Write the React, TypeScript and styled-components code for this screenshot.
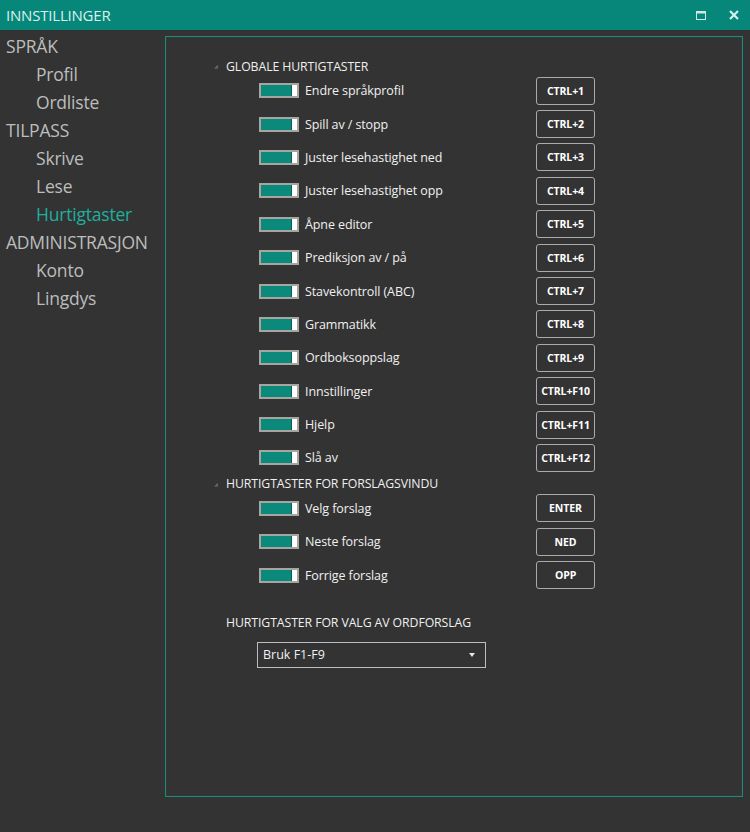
import styled, { createGlobalStyle } from "styled-components";

const GlobalStyle = createGlobalStyle`
    html, body {
        margin: 0;
        padding: 0;
        background: #333333;
    }
    body {
        font-family: "Open Sans", "Noto Sans", sans-serif;
    }
`;

const Window = styled.div`
    width: 750px;
    height: 832px;
    background: #333333;
    display: flex;
    flex-direction: column;
    overflow: hidden;
`;

const TitleBar = styled.div`
    height: 30px;
    background: #07877a;
    display: flex;
    align-items: center;
    justify-content: space-between;
    padding-left: 6px;
    padding-right: 11px;
    color: #d9f1ee;
    font-size: 15px;
    letter-spacing: -0.2px;
`;

const TitleButtons = styled.div`
    display: flex;
    align-items: center;
    gap: 23px;
`;

const Body = styled.div`
    flex: 1;
    display: flex;
    padding: 6px 7px 35px 0;
`;

const Sidebar = styled.div`
    width: 165px;
    display: flex;
    flex-direction: column;
`;

const NavItem = styled.div<{ $child?: boolean; $active?: boolean }>`
    height: 28px;
    line-height: 20px;
    font-size: 17.5px;
    padding-left: ${(p) => (p.$child ? "36px" : "6px")};
    color: ${(p) => (p.$active ? "#1fb09d" : "#bdbdbd")};
    letter-spacing: -0.2px;
    white-space: nowrap;
`;

const Panel = styled.div`
    flex: 1;
    border: 1px solid #1d8a7d;
    box-shadow: inset 0 0 0 1px #2e3a37;
    padding: 19px 0 0 48px;
    display: flex;
    flex-direction: column;
`;

const SectionHeader = styled.div<{ $tight?: boolean }>`
    display: flex;
    align-items: center;
    height: 20px;
    font-size: 12.3px;
    color: #f0f0f0;
    letter-spacing: -0.1px;
    margin-top: ${(p) => (p.$tight ? "-1px" : "0")};
    margin-bottom: -2px;
`;

const Arrow = styled.span`
    width: 12px;
    color: #6a6a6a;
    font-size: 5px;
`;

const Row = styled.div`
    display: flex;
    align-items: center;
    height: 33.4px;
    padding-left: 45px;
`;

const Toggle = styled.div`
    width: 36px;
    height: 11px;
    border: 2px solid #a8a4a0;
    background: #fff;
    display: flex;
    margin-right: 6px;
`;

const ToggleFill = styled.div`
    width: 30px;
    background: #0b8a7c;
    border-right: 1px solid #0a5f56;
`;

const Label = styled.div`
    width: 231px;
    font-size: 12.5px;
    color: #f0f0f0;
    letter-spacing: -0.1px;
`;

const KeyButton = styled.div`
    width: 57px;
    height: 26px;
    border: 1.5px solid #aaa;
    border-radius: 3px;
    display: flex;
    align-items: center;
    justify-content: center;
    font-size: 10.5px;
    font-weight: 700;
    color: #fff;
    letter-spacing: -0.1px;
`;

const SubHeader = styled.div`
    font-size: 12.3px;
    color: #f0f0f0;
    margin-top: 22px;
    padding-left: 12px;
    letter-spacing: -0.1px;
`;

const Select = styled.div`
    margin-top: 11px;
    margin-left: 43px;
    width: 229px;
    height: 26px;
    border: 1px solid #bdbdbd;
    display: flex;
    align-items: center;
    justify-content: space-between;
    padding: 0 10px 0 5px;
    box-sizing: border-box;
    font-size: 12.5px;
    color: #f0f0f0;
`;

const Caret = styled.span`
    width: 0;
    height: 0;
    border-left: 3.5px solid transparent;
    border-right: 3.5px solid transparent;
    border-top: 4px solid #e8e8e8;
`;

const globalKeys = [
    ["Endre språkprofil", "CTRL+1"],
    ["Spill av / stopp", "CTRL+2"],
    ["Juster lesehastighet ned", "CTRL+3"],
    ["Juster lesehastighet opp", "CTRL+4"],
    ["Åpne editor", "CTRL+5"],
    ["Prediksjon av / på", "CTRL+6"],
    ["Stavekontroll (ABC)", "CTRL+7"],
    ["Grammatikk", "CTRL+8"],
    ["Ordboksoppslag", "CTRL+9"],
    ["Innstillinger", "CTRL+F10"],
    ["Hjelp", "CTRL+F11"],
    ["Slå av", "CTRL+F12"],
];

const suggestKeys = [
    ["Velg forslag", "ENTER"],
    ["Neste forslag", "NED"],
    ["Forrige forslag", "OPP"],
];

const ShortcutRow = ({ label, keyName }: { label: string; keyName: string }) => (
    <Row>
        <Toggle>
            <ToggleFill />
        </Toggle>
        <Label>{label}</Label>
        <KeyButton>{keyName}</KeyButton>
    </Row>
);

const App = () => {
    return (
        <Window>
            <GlobalStyle />
            <TitleBar>
                <span>INNSTILLINGER</span>
                <TitleButtons>
                    <svg width="10" height="9" viewBox="0 0 10 9">
                        <rect x="0.5" y="0.5" width="9" height="8" fill="none" stroke="#cfe9e5" strokeWidth="1" />
                        <rect x="0.5" y="0.5" width="9" height="2" fill="#cfe9e5" />
                    </svg>
                    <svg width="10" height="10" viewBox="0 0 10 10">
                        <path d="M1 1 L9 9 M9 1 L1 9" stroke="#d9f1ee" strokeWidth="2.2" />
                    </svg>
                </TitleButtons>
            </TitleBar>
            <Body>
                <Sidebar>
                    <NavItem>SPRÅK</NavItem>
                    <NavItem $child>Profil</NavItem>
                    <NavItem $child>Ordliste</NavItem>
                    <NavItem>TILPASS</NavItem>
                    <NavItem $child>Skrive</NavItem>
                    <NavItem $child>Lese</NavItem>
                    <NavItem $child $active>
                        Hurtigtaster
                    </NavItem>
                    <NavItem>ADMINISTRASJON</NavItem>
                    <NavItem $child>Konto</NavItem>
                    <NavItem $child>Lingdys</NavItem>
                </Sidebar>
                <Panel>
                    <SectionHeader>
                        <Arrow>◢</Arrow>GLOBALE HURTIGTASTER
                    </SectionHeader>
                    {globalKeys.map(([l, k]) => (
                        <ShortcutRow key={l} label={l} keyName={k} />
                    ))}
                    <SectionHeader $tight>
                        <Arrow>◢</Arrow>HURTIGTASTER FOR FORSLAGSVINDU
                    </SectionHeader>
                    {suggestKeys.map(([l, k]) => (
                        <ShortcutRow key={l} label={l} keyName={k} />
                    ))}
                    <SubHeader>HURTIGTASTER FOR VALG AV ORDFORSLAG</SubHeader>
                    <Select>
                        <span>Bruk F1-F9</span>
                        <Caret />
                    </Select>
                </Panel>
            </Body>
        </Window>
    );
};

export default App;
